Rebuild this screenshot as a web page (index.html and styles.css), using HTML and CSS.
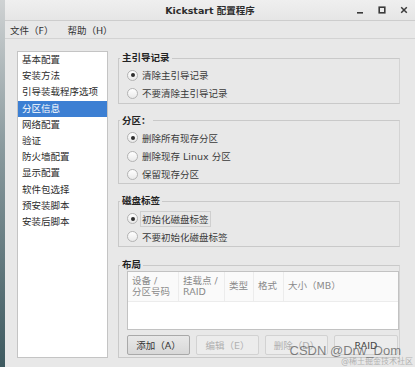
FILE: index.html
```html
<!DOCTYPE html>
<html lang="zh-CN">
<head>
  <meta charset="UTF-8">
  <title>Kickstart 配置程序</title>
  <link rel="stylesheet" href="styles.css">
</head>
<body>

  <div class="window">
    <div class="titlebar">
      <div class="title">Kickstart 配置程序</div>
      <div class="wm-buttons">
        <span class="wm-btn">
          <svg width="8" height="8" viewBox="0 0 8 8"><rect x="1" y="6" width="6" height="1.6" fill="#3a3a3a"/></svg>
        </span>
        <span class="wm-btn">
          <svg width="8" height="8" viewBox="0 0 8 8"><rect x="1.2" y="1.2" width="5.6" height="5.6" fill="none" stroke="#3a3a3a" stroke-width="1.6"/></svg>
        </span>
        <span class="wm-btn">
          <svg width="8" height="8" viewBox="0 0 8 8"><path d="M1.2 1.2 L6.8 6.8 M6.8 1.2 L1.2 6.8" stroke="#3a3a3a" stroke-width="1.5"/></svg>
        </span>
      </div>
    </div>

    <div class="menubar">
      <span class="menu-item">文件（F）</span>
      <span class="menu-item">帮助（H）</span>
    </div>

    <div class="content">
      <ul class="side-list">
        <li>基本配置</li>
        <li>安装方法</li>
        <li>引导装载程序选项</li>
        <li class="selected">分区信息</li>
        <li>网络配置</li>
        <li>验证</li>
        <li>防火墙配置</li>
        <li>显示配置</li>
        <li>软件包选择</li>
        <li>预安装脚本</li>
        <li>安装后脚本</li>
      </ul>

      <div class="panel">
        <fieldset class="group">
          <legend>主引导记录</legend>
          <div class="radio-row"><span class="radio checked"></span>清除主引导记录</div>
          <div class="radio-row"><span class="radio"></span>不要清除主引导记录</div>
        </fieldset>

        <fieldset class="group">
          <legend>分区：</legend>
          <div class="radio-row"><span class="radio checked"></span>删除所有现存分区</div>
          <div class="radio-row"><span class="radio"></span>删除现存 Linux 分区</div>
          <div class="radio-row"><span class="radio"></span>保留现存分区</div>
        </fieldset>

        <fieldset class="group">
          <legend>磁盘标签</legend>
          <div class="radio-row"><span class="radio checked"></span><span class="focus">初始化磁盘标签</span></div>
          <div class="radio-row"><span class="radio"></span>不要初始化磁盘标签</div>
        </fieldset>

        <fieldset class="group layout">
          <legend>布局</legend>
          <div class="table">
            <div class="table-head">
              <div class="col c1">设备 /<br>分区号码</div>
              <div class="col c2">挂载点 /<br>RAID</div>
              <div class="col c3">类型</div>
              <div class="col c4">格式</div>
              <div class="col c5">大小（MB）</div>
            </div>
          </div>
          <div class="buttons">
            <button class="btn">添加（A）</button>
            <button class="btn" disabled>编辑（E）</button>
            <button class="btn" disabled>删除（D）</button>
            <button class="btn raid" disabled>RAID</button>
          </div>
        </fieldset>
      </div>
    </div>

    <div class="watermark">
      <div class="wm-main">CSDN @Drw_Dom</div>
      <div class="wm-sub">@稀土掘金技术社区</div>
    </div>
  </div>

</body>
</html>
```

FILE: styles.css
```css
html, body {
  margin: 0px;
  padding: 0px;
}
body {
  width: 415px;
  height: 367px;
  overflow: hidden;
  background: linear-gradient(#cfd2d3, #8a9a9e 40%, #3e5a60);
  font-family: "DejaVu Sans", "Noto Sans CJK SC", sans-serif;
  font-size: 9.5px;
  color: #333;
}
.window {
  position: relative;
  margin-left: 5px;
  height: 367px;
  background-color: #e8e8e8;
  display: flex;
  flex-direction: column;
}
.titlebar {
  height: 20px;
  border-bottom: 1px solid #cdcdcd;
  background: linear-gradient(#efefef, #e6e6e6);
  display: flex;
  align-items: center;
  justify-content: center;
  position: relative;
}
.title {
  font-size: 9.5px;
  font-weight: bold;
  color: #2d2d2d;
}
.wm-buttons {
  position: absolute;
  right: 7px;
  top: 6px;
  display: flex;
}
.wm-btn {
  width: 8px;
  height: 8px;
  display: block;
}
.wm-btn + .wm-btn {
  margin-left: 14px;
}
.wm-btn svg {
  display: block;
}
.menubar {
  height: 17px;
  border-bottom: 1px solid #d3d3d3;
  display: flex;
  align-items: center;
  padding-left: 5px;
  gap: 14px;
}
.menu-item {
  color: #333;
}
.content {
  flex: 1;
  display: flex;
  padding: 12px 15px 9px 12px;
  gap: 10px;
  min-height: 0;
}
.side-list {
  list-style: none;
  margin: 0;
  padding: 0;
  width: 89px;
  background-color: white;
  border: 1px solid #c4c4c4;
}
.side-list li {
  height: 16.2px;
  line-height: 16.2px;
  padding-left: 4px;
  color: #2c2c2c;
  white-space: nowrap;
}
.side-list li.selected {
  background-color: #3c7fd3;
  color: white;
}
.panel {
  flex: 1;
  display: flex;
  flex-direction: column;
  margin-top: -1px;
}
.group {
  margin: 0;
  padding: 0 0 0 8px;
  border: 1px solid #c9c9c9;
  border-right-color: #d4d4d4;
  min-width: 0;
}
.group + .group {
  margin-top: 9px;
}
.group legend {
  font-weight: bold;
  color: #222;
  line-height: 16px;
  padding: 0 2px;
  margin-left: -7px;
}
.radio-row {
  height: 18.3px;
  display: flex;
  align-items: center;
  color: #3a3a3a;
  white-space: nowrap;
}
.radio {
  width: 9px;
  height: 9px;
  border: 1px solid #b3b3b3;
  border-radius: 50%;
  background: linear-gradient(#ffffff, #e9e9e9);
  margin-right: 4px;
  display: flex;
  align-items: center;
  justify-content: center;
}
.radio.checked::after {
  content: "";
  width: 4px;
  height: 4px;
  border-radius: 50%;
  background-color: #2e2e2e;
}
.focus {
  border: 1px solid #cfcfcf;
  padding: 0 1px;
  margin-left: -2px;
}
.group.layout {
  margin-top: 10px;
  flex: 1;
  padding-right: 0;
  display: flex;
  flex-direction: column;
}
.table {
  margin-top: -2px;
  height: 57px;
  background-color: white;
  border: 1px solid #c2c2c2;
}
.table-head {
  display: flex;
  height: 29px;
  background-color: #fafafa;
  border-bottom: 1px solid #ececec;
}
.col {
  display: flex;
  align-items: center;
  padding-left: 4px;
  color: #8a8a8a;
  line-height: 10.5px;
  border-right: 1px solid #ececec;
  box-sizing: border-box;
}
.c1 { width: 51px; }
.c2 { width: 46px; }
.c3 { width: 29px; }
.c4 { width: 30px; }
.c5 { flex: 1; border-right: none; }
.buttons {
  display: flex;
  gap: 6px;
  margin-top: 5px;
  padding-right: 1px;
}
.btn {
  height: 20px;
  width: 63px;
  font-family: "DejaVu Sans", "Noto Sans CJK SC", sans-serif;
  font-size: 9.5px;
  color: #333;
  background: linear-gradient(#e8e8e8, #d8d8d8);
  border: 1px solid #a9a9a9;
  border-radius: 2px;
  padding: 0;
}
.btn:disabled {
  color: #b0b0b0;
  background: #ececec;
  border-color: #d2d2d2;
}
.btn.raid {
  flex: 1;
  color: #444;
}
.watermark {
  position: absolute;
  right: 2px;
  bottom: 0px;
  text-align: right;
  pointer-events: none;
}
.wm-main {
  font-family: "Liberation Sans", "DejaVu Sans", sans-serif;
  font-size: 13px;
  color: rgba(90, 90, 90, 0.75);
  line-height: 13px;
  margin-right: 12px;
}
.wm-sub {
  font-size: 8px;
  line-height: 10px;
  color: rgba(150, 150, 150, 0.7);
}
```
